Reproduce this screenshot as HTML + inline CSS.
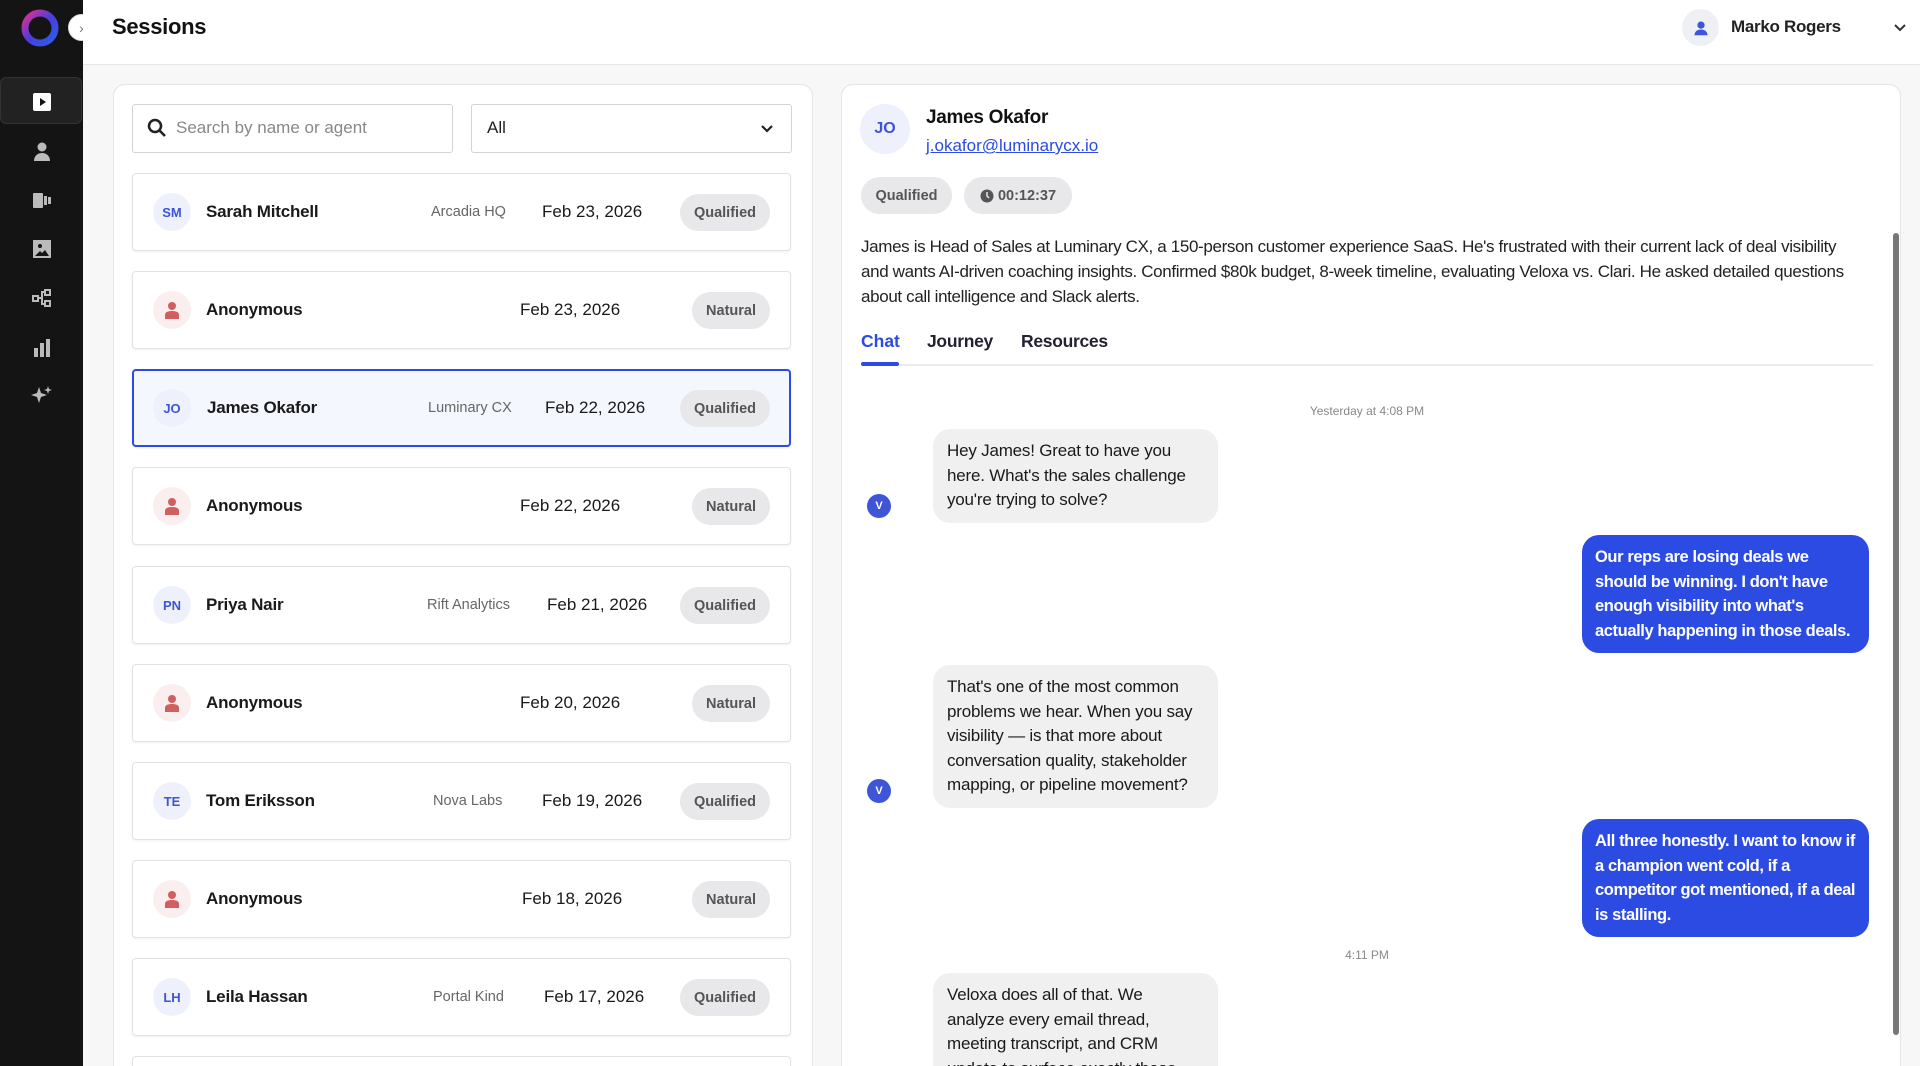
<!DOCTYPE html>
<html><head><meta charset="utf-8"><style>
*{box-sizing:border-box;margin:0;padding:0}
html,body{width:1920px;height:1066px;overflow:hidden}
body{background:#f7f7f8;font-family:"Liberation Sans",sans-serif;color:#111;position:relative}
#wrap{position:absolute;left:0;top:0;width:1920px;height:1066px;overflow:hidden}
.abs{position:absolute}
.side{left:0;top:0;width:83px;height:1066px;background:#141414}
.hdr{left:83px;top:0;right:0;height:65px;background:#fff;border-bottom:1px solid #e6e6e8}
.panel{background:#fff;border:1px solid #e5e5e7;border-bottom:none;border-radius:12px 12px 0 0}
.row{left:132px;width:659px;height:78px;background:#fff;border:1px solid #e2e2e4;border-radius:4px;box-shadow:0 1px 2px rgba(0,0,0,.06)}
.row .av{position:absolute;left:20px;top:19px;width:38px;height:38px;border-radius:50%;background:#eef1fb;color:#3d55d6;font-size:13px;font-weight:bold;display:flex;align-items:center;justify-content:center}
.row .av.anon{background:#fbeeee}
.row .nm{position:absolute;left:73px;top:28px;font-size:17px;font-weight:bold;color:#1a1a1a;letter-spacing:-0.2px}
.row .co{position:absolute;top:30px;font-size:14.5px;color:#666}
.row .dt{position:absolute;top:28px;font-size:17px;color:#1a1a1a}
.row .bd{position:absolute;right:20px;top:20px;height:37px;border-radius:19px;background:#e8e8ea;color:#555;font-size:14.5px;font-weight:bold;display:flex;align-items:center;padding:0 14px}
.bot{left:933px;width:285px;background:#f0f0f1;border-radius:17px;padding:10px 14px;font-size:17px;line-height:24.5px;color:#1a1a1a;letter-spacing:-0.2px}
.usr{left:1582px;width:287px;background:#2b4be3;border-radius:17px;padding:10px 13px;font-size:16.5px;line-height:24.5px;color:#fff;font-weight:bold;letter-spacing:-0.4px}
.v{left:867px;width:24px;height:24px;border-radius:50%;background:#3d55d6;color:#fff;font-size:11px;font-weight:bold;display:flex;align-items:center;justify-content:center}
.ic{left:31px;width:22px;height:22px}
</style></head><body><div id="wrap">
<div class="abs side"></div>
<svg class="abs" style="left:19px;top:7px" width="42" height="42" viewBox="0 0 42 42"><defs><linearGradient id="g" x1="0" y1="0" x2="1" y2="1"><stop offset="0" stop-color="#e0308a"/><stop offset=".5" stop-color="#4a3de0"/><stop offset="1" stop-color="#2b5ee8"/></linearGradient></defs><circle cx="21" cy="21" r="15" fill="none" stroke="url(#g)" stroke-width="7"/></svg>
<div class="abs" style="left:68px;top:14px;width:27px;height:27px;border-radius:50%;background:#fff;border:1px solid #ddd;color:#777;font-size:14px;display:flex;align-items:center;justify-content:center">›</div>
<div class="abs" style="left:0;top:77px;width:82px;height:47px;background:#222;border:1px solid #333;border-radius:6px"></div>
<svg class="abs ic" style="top:91px" viewBox="0 0 22 22"><rect x="2" y="2" width="18" height="18" rx="2" fill="#fff"/><path d="M9 7l6 4-6 4z" fill="#141414"/></svg>
<svg class="abs ic" style="top:140px" viewBox="0 0 22 22" fill="#bbb"><circle cx="11" cy="7" r="4.5"/><path d="M3 21c0-5 3.5-8 8-8s8 3 8 8z"/></svg>
<svg class="abs ic" style="top:189px" viewBox="0 0 22 22" fill="#bbb"><rect x="2" y="4" width="10" height="15" rx="1"/><rect x="13" y="7" width="3" height="9"/><rect x="17" y="8" width="3" height="7"/></svg>
<svg class="abs ic" style="top:238px" viewBox="0 0 22 22" fill="#bbb"><path d="M2 2h18v18H2z M4 18h14l-4-6-3 3-2-2z" fill-rule="evenodd"/><circle cx="9" cy="8" r="2" fill="#141414"/></svg>
<svg class="abs ic" style="top:287px" viewBox="0 0 22 22" fill="none" stroke="#bbb" stroke-width="2"><rect x="2" y="9" width="5" height="5"/><rect x="14" y="3" width="5" height="5"/><rect x="14" y="14" width="5" height="5"/><path d="M7 11h4V5h3M11 11v6h3"/></svg>
<svg class="abs ic" style="top:337px" viewBox="0 0 22 22" fill="#bbb"><rect x="3" y="11" width="4" height="9"/><rect x="9" y="6" width="4" height="14"/><rect x="15" y="2" width="4" height="18"/></svg>
<svg class="abs ic" style="top:385px" viewBox="0 0 22 22" fill="#bbb"><path d="M8 2l2 6 6 2-6 2-2 6-2-6-6-2 6-2z"/><path d="M17 1l1 3 3 1-3 1-1 3-1-3-3-1 3-1z"/></svg>

<div class="abs hdr"></div>
<div class="abs" style="left:112px;top:14px;font-size:22px;font-weight:bold;letter-spacing:-0.3px">Sessions</div>
<div class="abs" style="left:1682px;top:9px;width:37px;height:37px;border-radius:50%;background:#eef0f6;display:flex;align-items:center;justify-content:center"><svg width="16" height="16" viewBox="0 0 22 22" fill="#3d55d6"><circle cx="11" cy="7" r="5"/><path d="M2 21c0-5 4-8 9-8s9 3 9 8z"/></svg></div>
<div class="abs" style="left:1731px;top:17px;font-size:17px;font-weight:bold;color:#222;letter-spacing:-0.3px">Marko Rogers</div>
<svg class="abs" style="left:1893px;top:20px" width="14" height="14" viewBox="0 0 14 14" fill="none" stroke="#333" stroke-width="2"><path d="M2 5l5 5 5-5"/></svg>

<div class="abs panel" style="left:113px;top:84px;width:700px;height:982px"></div>
<div class="abs" style="left:132px;top:104px;width:321px;height:49px;border:1px solid #d4d4d8;border-radius:3px;background:#fff"></div>
<svg class="abs" style="left:147px;top:118px" width="20" height="20" viewBox="0 0 20 20" fill="none" stroke="#222" stroke-width="2.6"><circle cx="8" cy="8" r="6"/><path d="M12.5 12.5l5.5 5.5"/></svg>
<div class="abs" style="left:176px;top:118px;font-size:17px;color:#888">Search by name or agent</div>
<div class="abs" style="left:471px;top:104px;width:321px;height:49px;border:1px solid #d4d4d8;border-radius:3px;background:#fff"></div>
<div class="abs" style="left:487px;top:118px;font-size:17px;color:#222">All</div>
<svg class="abs" style="left:760px;top:122px" width="14" height="14" viewBox="0 0 14 14" fill="none" stroke="#222" stroke-width="2.2"><path d="M2 4l5 5 5-5"/></svg>

<div class="abs row" style="top:173px"><div class="av">SM</div><div class="nm">Sarah Mitchell</div><div class="co" style="left:298px">Arcadia HQ</div><div class="dt" style="left:409px">Feb 23, 2026</div><div class="bd">Qualified</div></div>
<div class="abs row" style="top:271px"><div class="av anon"><svg width="16" height="18" viewBox="0 0 16 18" fill="#d06060"><circle cx="8" cy="5" r="4"/><path d="M1 18v-4c0-3 3-4 7-4s7 1 7 4v4z"/></svg></div><div class="nm">Anonymous</div><div class="dt" style="left:387px">Feb 23, 2026</div><div class="bd">Natural</div></div>
<div class="abs row" style="top:369px;background:#f5f7ff;border:2px solid #2b4be3"><div class="av" style="left:19px;top:18px">JO</div><div class="nm" style="top:27px">James Okafor</div><div class="co" style="left:294px;top:29px">Luminary CX</div><div class="dt" style="left:411px;top:27px">Feb 22, 2026</div><div class="bd" style="top:19px;right:19px">Qualified</div></div>
<div class="abs row" style="top:467px"><div class="av anon"><svg width="16" height="18" viewBox="0 0 16 18" fill="#d06060"><circle cx="8" cy="5" r="4"/><path d="M1 18v-4c0-3 3-4 7-4s7 1 7 4v4z"/></svg></div><div class="nm">Anonymous</div><div class="dt" style="left:387px">Feb 22, 2026</div><div class="bd">Natural</div></div>
<div class="abs row" style="top:566px"><div class="av">PN</div><div class="nm">Priya Nair</div><div class="co" style="left:294px">Rift Analytics</div><div class="dt" style="left:414px">Feb 21, 2026</div><div class="bd">Qualified</div></div>
<div class="abs row" style="top:664px"><div class="av anon"><svg width="16" height="18" viewBox="0 0 16 18" fill="#d06060"><circle cx="8" cy="5" r="4"/><path d="M1 18v-4c0-3 3-4 7-4s7 1 7 4v4z"/></svg></div><div class="nm">Anonymous</div><div class="dt" style="left:387px">Feb 20, 2026</div><div class="bd">Natural</div></div>
<div class="abs row" style="top:762px"><div class="av">TE</div><div class="nm">Tom Eriksson</div><div class="co" style="left:300px">Nova Labs</div><div class="dt" style="left:409px">Feb 19, 2026</div><div class="bd">Qualified</div></div>
<div class="abs row" style="top:860px"><div class="av anon"><svg width="16" height="18" viewBox="0 0 16 18" fill="#d06060"><circle cx="8" cy="5" r="4"/><path d="M1 18v-4c0-3 3-4 7-4s7 1 7 4v4z"/></svg></div><div class="nm">Anonymous</div><div class="dt" style="left:389px">Feb 18, 2026</div><div class="bd">Natural</div></div>
<div class="abs row" style="top:958px"><div class="av">LH</div><div class="nm">Leila Hassan</div><div class="co" style="left:300px">Portal Kind</div><div class="dt" style="left:411px">Feb 17, 2026</div><div class="bd">Qualified</div></div>
<div class="abs row" style="top:1056px;height:10px;border-bottom:none;border-radius:4px 4px 0 0"></div>

<div class="abs panel" style="left:841px;top:84px;width:1060px;height:982px"></div>
<div class="abs" style="left:860px;top:104px;width:50px;height:50px;border-radius:50%;background:#eef1fb;color:#3d55d6;font-size:16px;font-weight:bold;display:flex;align-items:center;justify-content:center">JO</div>
<div class="abs" style="left:926px;top:107px;font-size:19px;font-weight:bold;letter-spacing:-0.3px">James Okafor</div>
<div class="abs" style="left:926px;top:136px;font-size:17px;color:#2b4be3;text-decoration:underline">j.okafor@luminarycx.io</div>
<div class="abs" style="left:861px;top:177px;width:91px;height:37px;border-radius:19px;background:#e8e8ea;color:#555;font-size:14.5px;font-weight:bold;display:flex;align-items:center;justify-content:center">Qualified</div>
<div class="abs" style="left:964px;top:177px;width:108px;height:37px;border-radius:19px;background:#e8e8ea;color:#555;font-size:14.5px;font-weight:bold;display:flex;align-items:center;justify-content:center"><svg width="14" height="14" viewBox="0 0 14 14" style="margin-right:4px"><circle cx="7" cy="7" r="6.5" fill="#555"/><path d="M7 3v4l2 2" stroke="#e8e8ea" stroke-width="1.5" fill="none"/></svg>00:12:37</div>
<div class="abs" style="left:861px;top:234px;width:1000px;font-size:17px;line-height:25px;color:#222;letter-spacing:-0.35px">James is Head of Sales at Luminary CX, a 150-person customer experience SaaS. He's frustrated with their current lack of deal visibility and wants AI-driven coaching insights. Confirmed $80k budget, 8-week timeline, evaluating Veloxa vs. Clari. He asked detailed questions about call intelligence and Slack alerts.</div>
<div class="abs" style="left:861px;top:331px;font-size:17.5px;color:#2b4be3;font-weight:bold">Chat</div>
<div class="abs" style="left:927px;top:331px;font-size:17.5px;color:#223;font-weight:bold;letter-spacing:-0.3px">Journey</div>
<div class="abs" style="left:1021px;top:331px;font-size:17.5px;color:#223;font-weight:bold;letter-spacing:-0.3px">Resources</div>
<div class="abs" style="left:861px;top:364px;width:1012px;height:2px;background:#ececee"></div>
<div class="abs" style="left:861px;top:362px;width:38px;height:4px;border-radius:2px;background:#2b4be3"></div>
<div class="abs" style="left:1893px;top:233px;width:6px;height:802px;border-radius:3px;background:#777"></div>

<div class="abs" style="left:1267px;top:404px;width:200px;text-align:center;font-size:12px;color:#888">Yesterday at 4:08 PM</div>
<div class="abs bot" style="top:429px">Hey James! Great to have you here. What's the sales challenge you're trying to solve?</div>
<div class="abs v" style="top:494px">V</div>
<div class="abs usr" style="top:535px">Our reps are losing deals we should be winning. I don't have enough visibility into what's actually happening in those deals.</div>
<div class="abs bot" style="top:665px">That's one of the most common problems we hear. When you say visibility — is that more about conversation quality, stakeholder mapping, or pipeline movement?</div>
<div class="abs v" style="top:779px">V</div>
<div class="abs usr" style="top:819px">All three honestly. I want to know if a champion went cold, if a competitor got mentioned, if a deal is stalling.</div>
<div class="abs" style="left:1267px;top:948px;width:200px;text-align:center;font-size:12px;color:#888">4:11 PM</div>
<div class="abs bot" style="top:973px;height:93px;border-radius:17px 17px 0 0;overflow:hidden">Veloxa does all of that. We analyze every email thread, meeting transcript, and CRM update to surface exactly those</div>
</div></body></html>
